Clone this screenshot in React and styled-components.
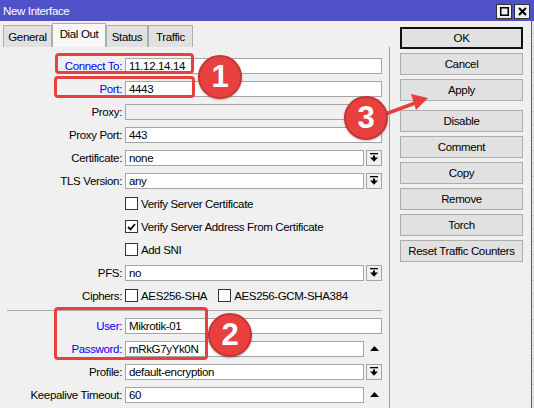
import React from 'react'
import styled, { createGlobalStyle } from 'styled-components'

const GlobalStyle = createGlobalStyle`
    html, body {
        margin: 0;
        padding: 0;
    }
    body {
        width: 534px;
        height: 408px;
        overflow: hidden;
        background: #f0f0f0;
        font-family: "Liberation Sans", Arial, sans-serif;
        font-size: 11.5px;
        letter-spacing: -0.35px;
        color: #000;
    }
`

const DropIcon = () => (
    <svg width="8" height="9" viewBox="0 0 8 9">
        <rect x="0" y="0" width="8" height="1.3" fill="#000" />
        <rect x="3" y="2.5" width="2" height="2.5" fill="#000" />
        <polygon points="0,4.5 8,4.5 4,8.8" fill="#000" />
    </svg>
)

const UpIcon = () => (
    <svg width="9" height="5" viewBox="0 0 9 5">
        <polygon points="0,5 9,5 4.5,0" fill="#000" />
    </svg>
)

const CheckIcon = () => (
    <svg width="9" height="8" viewBox="0 0 9 8">
        <polyline points="1,4 3.5,6.5 8,1" fill="none" stroke="#000" strokeWidth="1.8" />
    </svg>
)

const TextField = ({ value, disabled, tail }) => (
    <Field>
        <Input $disabled={disabled}>{value}</Input>
        {tail === 'drop' && (
            <DropButton>
                <DropIcon />
            </DropButton>
        )}
        {tail === 'up' && (
            <Spinner>
                <UpIcon />
            </Spinner>
        )}
    </Field>
)

const Check = ({ checked, children, $gap }) => (
    <CheckItem $gap={$gap}>
        <CheckBox>{checked && <CheckIcon />}</CheckBox>
        <span>{children}</span>
    </CheckItem>
)

const App = () => {
    return (
        <Window>
            <GlobalStyle />
            <TitleBar>
                <Title>New Interface</Title>
                <TitleButtons>
                    <TitleButton>
                        <svg width="9" height="9" viewBox="0 0 9 9">
                            <rect x="0.75" y="0.75" width="7.5" height="7.5" fill="none" stroke="#000" strokeWidth="1.5" />
                        </svg>
                    </TitleButton>
                    <TitleButton>
                        <svg width="9" height="9" viewBox="0 0 9 9">
                            <path d="M1 1 L8 8 M8 1 L1 8" stroke="#000" strokeWidth="2" />
                        </svg>
                    </TitleButton>
                </TitleButtons>
            </TitleBar>
            <Body>
                <LeftColumn>
                    <TabStrip>
                        <Tab $w={49}>General</Tab>
                        <Tab $w={54} $active>Dial Out</Tab>
                        <Tab $w={42}>Status</Tab>
                        <Tab $w={45}>Traffic</Tab>
                    </TabStrip>
                    <FormPanel>
                        <Row>
                            <Label $link>Connect To:</Label>
                            <TextField value="11.12.14.14" />
                        </Row>
                        <Row>
                            <Label $link>Port:</Label>
                            <TextField value="4443" />
                        </Row>
                        <Row>
                            <Label>Proxy:</Label>
                            <TextField value="" disabled />
                        </Row>
                        <Row>
                            <Label>Proxy Port:</Label>
                            <TextField value="443" />
                        </Row>
                        <Row>
                            <Label>Certificate:</Label>
                            <TextField value="none" tail="drop" />
                        </Row>
                        <Row>
                            <Label>TLS Version:</Label>
                            <TextField value="any" tail="drop" />
                        </Row>
                        <Row>
                            <span />
                            <Check>Verify Server Certificate</Check>
                        </Row>
                        <Row>
                            <span />
                            <Check checked>Verify Server Address From Certificate</Check>
                        </Row>
                        <Row>
                            <span />
                            <Check>Add SNI</Check>
                        </Row>
                        <Row>
                            <Label>PFS:</Label>
                            <TextField value="no" tail="drop" />
                        </Row>
                        <Row>
                            <Label>Ciphers:</Label>
                            <CheckGroup>
                                <Check>AES256-SHA</Check>
                                <Check $gap={11}>AES256-GCM-SHA384</Check>
                            </CheckGroup>
                        </Row>
                        <Separator />
                        <Row>
                            <Label $link>User:</Label>
                            <TextField value="Mikrotik-01" />
                        </Row>
                        <Row>
                            <Label $link>Password:</Label>
                            <TextField value="mRkG7yYk0N" tail="up" />
                        </Row>
                        <Row>
                            <Label>Profile:</Label>
                            <TextField value="default-encryption" tail="drop" />
                        </Row>
                        <Row>
                            <Label>Keepalive Timeout:</Label>
                            <TextField value="60" tail="up" />
                        </Row>
                    </FormPanel>
                </LeftColumn>
                <ButtonColumn>
                    <Button $default>OK</Button>
                    <Button>Cancel</Button>
                    <Button>Apply</Button>
                    <Button $spaced>Disable</Button>
                    <Button>Comment</Button>
                    <Button>Copy</Button>
                    <Button>Remove</Button>
                    <Button>Torch</Button>
                    <Button>Reset Traffic Counters</Button>
                </ButtonColumn>
                <Edge />
            </Body>

            {/* annotations */}
            <Mark $x={55} $y={53} $w={139} $h={21} />
            <Mark $x={54} $y={76} $w={141} $h={22} />
            <Mark $x={54} $y={307} $w={154} $h={53} />
            <Badge $x={220} $y={77}>1</Badge>
            <Badge $x={230} $y={335}>2</Badge>
            <Arrow width="70" height="40" viewBox="0 0 70 40">
                <line x1="2" y1="30" x2="40" y2="16" stroke="#e8403f" strokeWidth="3.5" strokeLinecap="round" />
                <polygon points="50,12 33,8 38,24" fill="#e8403f" />
            </Arrow>
            <Badge $x={366} $y={118}>3</Badge>
        </Window>
    )
}

const Window = styled.div`
    width: 534px;
    height: 408px;
    display: flex;
    flex-direction: column;
    position: relative;
    overflow: hidden;
`

const TitleBar = styled.div`
    height: 21px;
    flex: none;
    background: #5050c9;
    color: #fff;
    display: flex;
    align-items: center;
    padding: 0 4px 0 3px;
`

const Title = styled.div`
    flex: 1;
`

const TitleButtons = styled.div`
    display: flex;
    gap: 2px;
    margin-top: 1px;
`

const TitleButton = styled.div`
    width: 14px;
    height: 13px;
    background: #f0f0f0;
    border: 1px solid #333;
    display: flex;
    align-items: center;
    justify-content: center;
`

const Body = styled.div`
    flex: 1;
    display: flex;
    min-height: 0;
`

const LeftColumn = styled.div`
    width: 390px;
    display: flex;
    flex-direction: column;
`

const TabStrip = styled.div`
    height: 26px;
    flex: none;
    display: flex;
    align-items: flex-end;
    padding-left: 3px;
`

const Tab = styled.div`
    box-sizing: border-box;
    width: ${p => p.$w}px;
    height: ${p => (p.$active ? 24 : 22)}px;
    border: 1px solid #adadad;
    border-bottom: none;
    background: ${p => (p.$active ? '#f7f7f7' : '#e1e1e1')};
    display: flex;
    align-items: center;
    justify-content: center;
    padding-bottom: ${p => (p.$active ? 3 : 0)}px;
`

const FormPanel = styled.div`
    flex: 1;
    border-right: 1px solid #a0a0a0;
    padding: 7px 7px 0 7px;
    display: flex;
    flex-direction: column;
`

const Row = styled.div`
    height: 23px;
    flex: none;
    display: grid;
    grid-template-columns: 115px 1fr;
    column-gap: 3px;
    align-items: center;
`

const Label = styled.div`
    text-align: right;
    white-space: nowrap;
    color: ${p => (p.$link ? '#0000ff' : '#000')};
`

const Field = styled.div`
    display: flex;
    align-items: center;
    gap: 2px;
`

const Input = styled.div`
    flex: 1;
    box-sizing: border-box;
    height: 16px;
    line-height: 14px;
    border: 1px solid #a5a5a5;
    background: ${p => (p.$disabled ? '#f0f0f0' : '#fff')};
    padding: 0 3px;
    white-space: nowrap;
`

const DropButton = styled.div`
    box-sizing: border-box;
    width: 16px;
    height: 16px;
    border: 1px solid #a5a5a5;
    background: #f0f0f0;
    display: flex;
    align-items: center;
    justify-content: center;
`

const Spinner = styled.div`
    width: 16px;
    height: 16px;
    display: flex;
    align-items: center;
    justify-content: center;
    padding-bottom: 1px;
    box-sizing: border-box;
`

const CheckGroup = styled.div`
    display: flex;
    align-items: center;
`

const CheckItem = styled.div`
    display: flex;
    align-items: center;
    gap: 3px;
    margin-left: ${p => p.$gap || 0}px;
    white-space: nowrap;
`

const CheckBox = styled.div`
    box-sizing: border-box;
    width: 13px;
    height: 13px;
    border: 1px solid #333;
    background: #fff;
    display: flex;
    align-items: center;
    justify-content: center;
`

const Separator = styled.div`
    height: 1px;
    flex: none;
    background: #a8a8a8;
    margin: 3px 0;
`

const ButtonColumn = styled.div`
    width: 141px;
    box-sizing: border-box;
    padding: 6px 8px 0 10px;
    display: flex;
    flex-direction: column;
    gap: 4px;
`

const Button = styled.div`
    box-sizing: border-box;
    width: 123px;
    height: 22px;
    flex: none;
    border: ${p => (p.$default ? '2px solid #111' : '1px solid #adadad')};
    background: #e1e1e1;
    display: flex;
    align-items: center;
    justify-content: center;
    white-space: nowrap;
    margin-top: ${p => (p.$spaced ? 5 : 0)}px;
`

const Edge = styled.div`
    flex: 1;
    border-left: 1px solid #5a5a5a;
    background: repeating-linear-gradient(180deg, #e6e6e6 0 12px, #cfcfcf 12px 13px);
`

const Mark = styled.div`
    position: absolute;
    left: ${p => p.$x}px;
    top: ${p => p.$y}px;
    width: ${p => p.$w}px;
    height: ${p => p.$h}px;
    box-sizing: border-box;
    border: 3px solid #e8403f;
    border-radius: 4px;
`

const Badge = styled.div`
    position: absolute;
    left: ${p => p.$x - 22}px;
    top: ${p => p.$y - 22}px;
    width: 44px;
    height: 44px;
    box-sizing: border-box;
    border-radius: 50%;
    background: #e8403f;
    border: 2px solid #c93332;
    box-shadow: 0 1px 2px rgba(0, 0, 0, 0.3);
    color: #fff;
    font-family: "Liberation Sans", Arial, sans-serif;
    font-weight: bold;
    font-size: 31px;
    letter-spacing: 0;
    display: flex;
    align-items: center;
    justify-content: center;
`

const Arrow = styled.svg`
    position: absolute;
    left: 378px;
    top: 86px;
`

export default App
